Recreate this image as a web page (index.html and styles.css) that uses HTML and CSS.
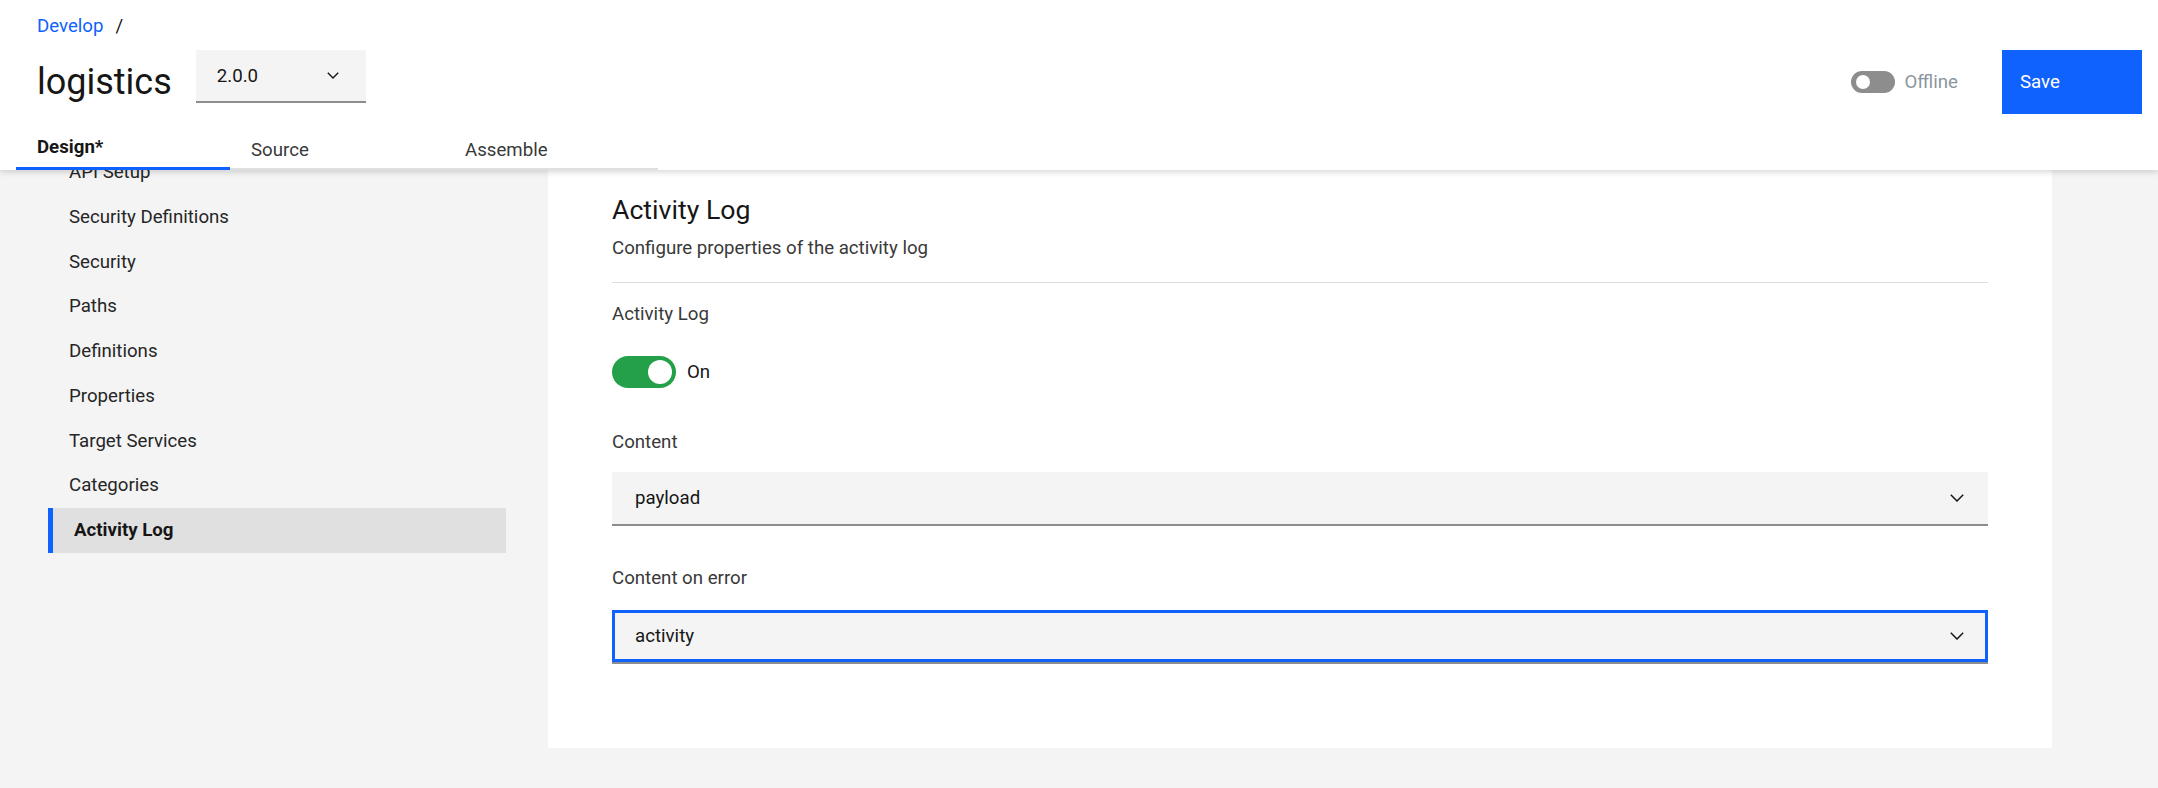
FILE: index.html
```html
<!DOCTYPE html>
<html lang="en">
<head>
<meta charset="utf-8">
<title>logistics - Design</title>
<link rel="stylesheet" href="styles.css">
</head>
<body>
<header class="header">
  <div class="header-bar">
    <div class="title-block">
      <div class="breadcrumb"><a class="crumb-link" href="#">Develop</a><span class="crumb-sep">/</span></div>
      <div class="title-row">
        <h1 class="title">logistics</h1>
        <div class="version-select">
          <span class="version-value">2.0.0</span>
          <svg class="chev-sm" width="12" height="7" viewBox="0 0 12 7"><path d="M0.8 0.8 L6 6 L11.2 0.8" fill="none" stroke="#161616" stroke-width="1.4"/></svg>
        </div>
      </div>
    </div>
    <div class="actions">
      <span class="toggle-sm"><span class="knob-sm"></span></span>
      <span class="offline-label">Offline</span>
      <button class="save-btn">Save</button>
    </div>
  </div>
  <nav class="tabs">
    <div class="tab active">Design*</div>
    <div class="tab">Source</div>
    <div class="tab">Assemble</div>
  </nav>
</header>
<div class="main">
  <aside class="sidebar">
    <ul class="nav">
      <li class="nav-item">API Setup</li>
      <li class="nav-item">Security Definitions</li>
      <li class="nav-item">Security</li>
      <li class="nav-item">Paths</li>
      <li class="nav-item">Definitions</li>
      <li class="nav-item">Properties</li>
      <li class="nav-item">Target Services</li>
      <li class="nav-item">Categories</li>
      <li class="nav-item active">Activity Log</li>
    </ul>
  </aside>
  <section class="card">
    <h2 class="card-title">Activity Log</h2>
    <p class="card-desc">Configure properties of the activity log</p>
    <div class="divider"></div>
    <div class="field-label first">Activity Log</div>
    <div class="toggle-row">
      <span class="toggle-on"><span class="knob-on"></span></span>
      <span class="toggle-text">On</span>
    </div>
    <div class="field-label content-label">Content</div>
    <div class="select">
      <span class="select-value">payload</span>
      <svg width="14" height="8" viewBox="0 0 14 8"><path d="M0.8 0.8 L7 7 L13.2 0.8" fill="none" stroke="#161616" stroke-width="1.5"/></svg>
    </div>
    <div class="field-label error-label">Content on error</div>
    <div class="select focused">
      <span class="select-value">activity</span>
      <svg width="14" height="8" viewBox="0 0 14 8"><path d="M0.8 0.8 L7 7 L13.2 0.8" fill="none" stroke="#161616" stroke-width="1.5"/></svg>
    </div>
  </section>
</div>
</body>
</html>
```
FILE: styles.css
```css
* { box-sizing: border-box; }
html, body { margin: 0; padding: 0; }
body {
  background: #f4f4f4;
  font-family: Roboto, "Liberation Sans", Arial, sans-serif;
  font-size: 18.67px;
  color: #161616;
  width: 2158px;
  min-height: 788px;
}

/* Header */
.header {
  position: relative;
  z-index: 2;
  background: #fff;
  height: 170px;
  box-shadow: 0 2px 6px rgba(0, 0, 0, 0.16);
}
.header-bar {
  display: flex;
  justify-content: space-between;
  align-items: flex-start;
}
.title-block { padding-left: 37px; }
.breadcrumb {
  padding-top: 14px;
  line-height: 24px;
  height: 38px;
  display: flex;
  gap: 12px;
}
.crumb-link { color: #0f62fe; text-decoration: none; }
.crumb-sep { color: #161616; }
.title-row {
  margin-top: 12px;
  height: 53px;
  display: flex;
  align-items: flex-start;
  gap: 24px;
}
.title {
  margin: 10px 0 0;
  font-size: 36px;
  font-weight: 400;
  line-height: 44px;
  color: #161616;
}
.version-select {
  width: 170px;
  height: 53px;
  background: #f4f4f4;
  border-bottom: 2px solid #8d8d8d;
  display: flex;
  align-items: center;
  justify-content: space-between;
  padding: 0 27px 0 21px;
}
.version-value { line-height: 24px; }

.actions {
  margin-top: 50px;
  padding-right: 16px;
  height: 64px;
  display: flex;
  align-items: center;
}
.toggle-sm {
  width: 44px;
  height: 22px;
  border-radius: 11px;
  background: #8d8d8d;
  display: flex;
  align-items: center;
  padding-left: 5px;
}
.knob-sm {
  width: 14px;
  height: 14px;
  border-radius: 50%;
  background: #fff;
}
.offline-label {
  margin-left: 10px;
  color: #8b96a0;
  line-height: 24px;
}
.save-btn {
  margin-left: 44px;
  width: 140px;
  height: 64px;
  border: 0;
  background: #0f62fe;
  color: #fff;
  font-family: inherit;
  font-size: 18.67px;
  text-align: left;
  padding: 0 0 0 18px;
}

/* Tabs */
.tabs {
  display: flex;
  margin-left: 16px;
}
.tab {
  width: 214px;
  height: 56px;
  padding: 24px 0 0 21px;
  line-height: 24px;
  color: #393939;
  border-bottom: 2px solid #e0e0e0;
}
.tab.active {
  padding-top: 21px;
  font-weight: 700;
  color: #161616;
  border-bottom: 3px solid #0f62fe;
}

/* Main */
.main {
  display: flex;
  align-items: flex-start;
  margin-top: -20px;
}
.sidebar {
  width: 548px;
  flex: none;
  padding-left: 48px;
}
.nav {
  list-style: none;
  margin: 0;
  padding: 0;
  width: 458px;
}
.nav-item {
  height: 44.75px;
  line-height: 44.75px;
  padding-left: 21px;
  color: #262626;
}
.nav-item.active {
  background: #e0e0e0;
  border-left: 5px solid #0f62fe;
  font-weight: 700;
  color: #161616;
}

.card {
  width: 1504px;
  flex: none;
  background: #fff;
  padding: 42px 64px 84px;
}
.card-title {
  margin: 0;
  font-size: 26.67px;
  font-weight: 400;
  line-height: 36px;
  color: #161616;
}
.card-desc {
  margin: 8px 0 0;
  line-height: 24px;
  color: #393939;
}
.divider {
  margin-top: 22px;
  height: 1px;
  background: #dcdcdc;
}
.field-label {
  line-height: 24px;
  color: #393939;
}
.field-label.first { margin-top: 19px; }
.field-label.content-label { margin-top: 42px; }
.field-label.error-label { margin-top: 40px; }

.toggle-row {
  margin-top: 30px;
  display: flex;
  align-items: center;
}
.toggle-on {
  width: 64px;
  height: 32px;
  border-radius: 16px;
  background: #24a148;
  display: flex;
  align-items: center;
  justify-content: flex-end;
  padding-right: 4px;
}
.knob-on {
  width: 24px;
  height: 24px;
  border-radius: 50%;
  background: #fff;
}
.toggle-text {
  margin-left: 11px;
  line-height: 24px;
  color: #161616;
}

.select {
  margin-top: 18px;
  height: 54px;
  background: #f4f4f4;
  border-bottom: 2px solid #8d8d8d;
  display: flex;
  align-items: center;
  justify-content: space-between;
  padding: 0 24px 0 23px;
}
.select.focused {
  margin-top: 20px;
  box-shadow: inset 0 0 0 3px #0f62fe;
}
.select-value { line-height: 24px; color: #161616; }
```
